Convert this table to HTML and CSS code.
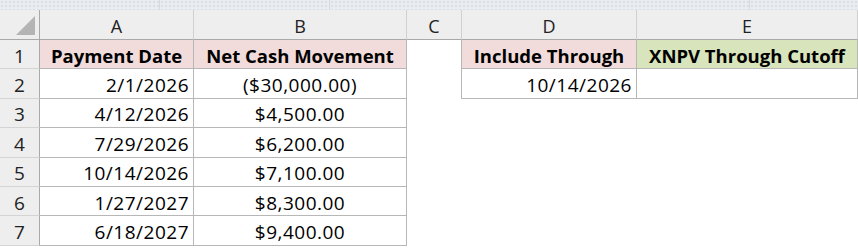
FILE: index.html
```html
<!DOCTYPE html>
<html>
<head>
<meta charset="utf-8">
<link rel="stylesheet" href="styles.css">
</head>
<body>
<div class="topbar">
  <div class="seg seg1"></div>
  <div class="seg seg2"></div>
  <div class="seg seg3"></div>
  <div class="seg seg4"></div>
</div>
<div class="sheet">
  <div class="hdr corner"><span class="tri"></span></div>
  <div class="hdr col">A</div>
  <div class="hdr col">B</div>
  <div class="hdr col">C</div>
  <div class="hdr col">D</div>
  <div class="hdr col">E</div>

  <div class="hdr row">1</div>
  <div class="cell bd pink bold center">Payment Date</div>
  <div class="cell bd pink bold center">Net Cash Movement</div>
  <div class="cell br"></div>
  <div class="cell bd pink bold center">Include Through</div>
  <div class="cell bd green bold center">XNPV Through Cutoff</div>

  <div class="hdr row">2</div>
  <div class="cell bd right">2/1/2026</div>
  <div class="cell bd center">($30,000.00)</div>
  <div class="cell br"></div>
  <div class="cell bd right">10/14/2026</div>
  <div class="cell bd"></div>

  <div class="hdr row">3</div>
  <div class="cell bd right">4/12/2026</div>
  <div class="cell bd center">$4,500.00</div>
  <div class="cell"></div>
  <div class="cell"></div>
  <div class="cell"></div>

  <div class="hdr row">4</div>
  <div class="cell bd right">7/29/2026</div>
  <div class="cell bd center">$6,200.00</div>
  <div class="cell"></div>
  <div class="cell"></div>
  <div class="cell"></div>

  <div class="hdr row">5</div>
  <div class="cell bd right">10/14/2026</div>
  <div class="cell bd center">$7,100.00</div>
  <div class="cell"></div>
  <div class="cell"></div>
  <div class="cell"></div>

  <div class="hdr row">6</div>
  <div class="cell bd right">1/27/2027</div>
  <div class="cell bd center">$8,300.00</div>
  <div class="cell"></div>
  <div class="cell"></div>
  <div class="cell"></div>

  <div class="hdr row">7</div>
  <div class="cell bd right">6/18/2027</div>
  <div class="cell bd center">$9,400.00</div>
  <div class="cell"></div>
  <div class="cell"></div>
  <div class="cell"></div>
</div>
</body>
</html>
```
FILE: styles.css
```css
* { box-sizing: border-box; }
html, body {
  margin: 0;
  padding: 0;
  background: #ffffff;
  width: 858px;
  height: 248px;
  overflow: hidden;
  font-family: "Open Sans", "Liberation Sans", sans-serif;
  color: #000;
}
.topbar {
  display: flex;
  height: 10px;
  background: #eaedf1;
}
.seg {
  height: 10px;
  background-color: #e9ecf0;
  background-image: radial-gradient(circle, #d9dde3 0.7px, transparent 0.8px);
  background-size: 4px 4px;
  border-right: 1px solid #d6d9de;
}
.seg1 { width: 160px; }
.seg2 { width: 170px; }
.seg3 { width: 420px; }
.seg4 { flex: 1; border-right: none; }

.sheet {
  display: grid;
  grid-template-columns: 40px 154px 213px 55px 175px 221px;
  grid-template-rows: 30px repeat(7, 29.4px);
  font-size: 19px;
}
.hdr {
  background: #eeeeee;
  color: #222;
  display: flex;
  justify-content: center;
  align-items: flex-end;
  padding-bottom: 1px;
  line-height: 1.2;
}
.hdr.col {
  border-right: 1px solid #d0d0d0;
  border-bottom: 1px solid #a9a9a9;
  font-size: 18px;
}
.hdr.col:last-child { border-right: none; }
.hdr.corner {
  border-right: 1px solid #a9a9a9;
  border-bottom: 1px solid #a9a9a9;
  position: relative;
}
.tri {
  position: absolute;
  right: 4px;
  bottom: 4px;
  width: 0;
  height: 0;
  border-left: 19px solid transparent;
  border-bottom: 19px solid #b4b4b4;
}
.hdr.row {
  border-right: 1px solid #a9a9a9;
  border-bottom: 1px solid #d4d4d4;
}
.cell {
  display: flex;
  align-items: flex-end;
  padding: 0 4px 1px 4px;
  line-height: 1.2;
  white-space: nowrap;
  overflow: hidden;
  letter-spacing: 0.5px;
}
.bd {
  border-right: 1px solid #b7b7b7;
  border-bottom: 1px solid #b7b7b7;
}
.br { border-right: 1px solid #b7b7b7; }
.pink { background: #f2dcdb; }
.green { background: #d8e4bc; }
.bold { font-weight: 700; font-size: 18.5px; letter-spacing: 0; }
.center { justify-content: center; }
.right { justify-content: flex-end; }
```
